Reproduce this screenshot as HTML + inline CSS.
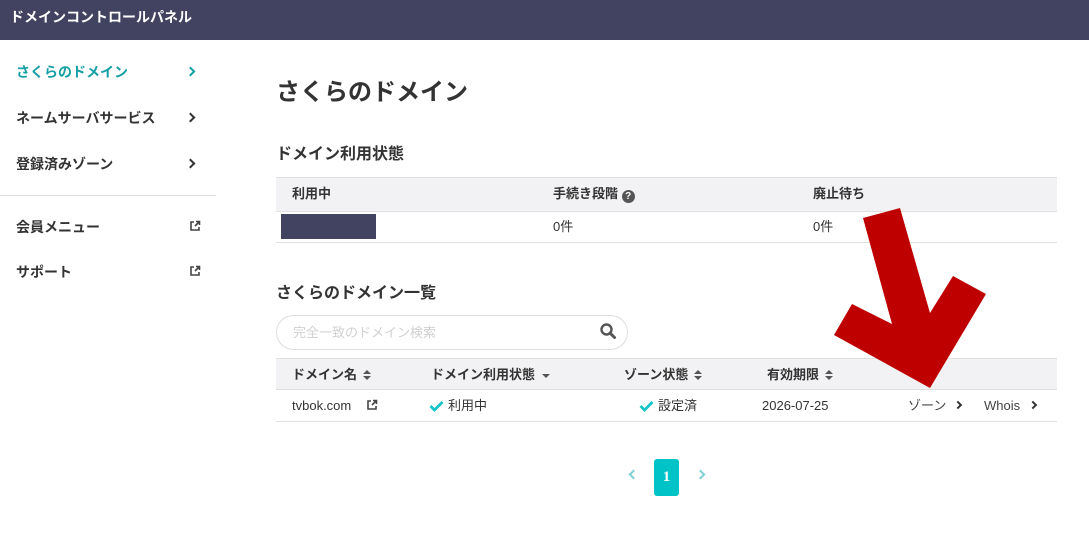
<!DOCTYPE html>
<html><head><meta charset="utf-8"><style>
*{margin:0;padding:0;box-sizing:border-box}
body{width:1089px;height:536px;background:#fff;position:relative;overflow:hidden;font-family:"Liberation Sans","Noto Sans CJK JP",sans-serif;color:#333}
.a{position:absolute;white-space:nowrap;line-height:1.15}
.b{font-weight:bold}
.hdr{left:0;top:0;width:1089px;height:40px;background:#424261}
.nav{font-size:14px;font-weight:bold;color:#333;left:16px}
.chev{position:absolute;width:7px;height:7px;border-right:2px solid #333;border-top:2px solid #333;transform:rotate(45deg)}
.th{background:#f2f2f4;border-top:1px solid #e0e0e0;border-bottom:1px solid #e0e0e0}
.td{border-bottom:1px solid #e0e0e0}
.f13{font-size:13px}
.sort{display:inline-block;vertical-align:middle;margin-left:6px;width:8px;height:11px;position:relative}
.sort:before{content:"";position:absolute;left:0;top:0;border:4px solid transparent;border-bottom:4px solid #555;border-top:0}
.sort:after{content:"";position:absolute;left:0;top:6px;border:4px solid transparent;border-top:4px solid #555;border-bottom:0}
</style></head><body>
<div class="a hdr"></div>
<div class="a b" style="left:10px;top:9px;font-size:14px;color:#fff">ドメインコントロールパネル</div>

<div class="a nav" style="top:64px;color:#16a0a5">さくらのドメイン</div>
<div class="chev" style="left:187px;top:68px;border-color:#16a0a5"></div>
<div class="a nav" style="top:110px">ネームサーバサービス</div>
<div class="chev" style="left:187px;top:114px"></div>
<div class="a nav" style="top:156px">登録済みゾーン</div>
<div class="chev" style="left:187px;top:160px"></div>
<div class="a" style="left:0;top:195px;width:216px;height:1px;background:#ddd"></div>
<div class="a nav" style="top:219px">会員メニュー</div>
<svg class="a" style="left:189px;top:220px" width="12" height="12" viewBox="0 0 12 12"><path d="M5 2H2v8h8V7" fill="none" stroke="#444" stroke-width="1.6"/><path d="M6 6L10.5 1.5M7 1.5h3.5V5" fill="none" stroke="#444" stroke-width="1.6"/></svg>
<div class="a nav" style="top:264px">サポート</div>
<svg class="a" style="left:189px;top:265px" width="12" height="12" viewBox="0 0 12 12"><path d="M5 2H2v8h8V7" fill="none" stroke="#444" stroke-width="1.6"/><path d="M6 6L10.5 1.5M7 1.5h3.5V5" fill="none" stroke="#444" stroke-width="1.6"/></svg>

<div class="a b" style="left:276px;top:79px;font-size:24px">さくらのドメイン</div>
<div class="a b" style="left:276px;top:146px;font-size:16px">ドメイン利用状態</div>

<div class="a th" style="left:276px;top:177px;width:781px;height:35px"></div>
<div class="a td" style="left:276px;top:212px;width:781px;height:31px"></div>
<div class="a b f13" style="left:292px;top:187px">利用中</div>
<div class="a b f13" style="left:553px;top:187px">手続き段階 <span style="display:inline-block;width:13px;height:13px;border-radius:50%;background:#555;color:#fff;font-size:10px;text-align:center;line-height:13px;vertical-align:-1px">?</span></div>
<div class="a b f13" style="left:813px;top:187px">廃止待ち</div>
<div class="a" style="left:281px;top:214px;width:95px;height:25px;background:#424261"></div>
<div class="a f13" style="left:553px;top:220px">0件</div>
<div class="a f13" style="left:813px;top:220px">0件</div>

<div class="a b" style="left:276px;top:285px;font-size:16px">さくらのドメイン一覧</div>
<div class="a" style="left:276px;top:315px;width:352px;height:35px;border:1px solid #ddd;border-radius:18px"></div>
<div class="a f13" style="left:293px;top:326px;color:#d0d0d0">完全一致のドメイン検索</div>
<svg class="a" style="left:599px;top:322px" width="18" height="18" viewBox="0 0 18 18"><circle cx="7.5" cy="7.5" r="5" fill="none" stroke="#555" stroke-width="2.4"/><path d="M11 11l4.5 4.5" stroke="#555" stroke-width="3" stroke-linecap="round"/></svg>

<div class="a th" style="left:276px;top:358px;width:781px;height:32px"></div>
<div class="a td" style="left:276px;top:390px;width:781px;height:32px"></div>
<div class="a b f13" style="left:292px;top:368px">ドメイン名<span class="sort"></span></div>
<div class="a b f13" style="left:431px;top:368px">ドメイン利用状態<span style="display:inline-block;margin-left:7px;border:4px solid transparent;border-top:4px solid #555;border-bottom:0;vertical-align:middle"></span></div>
<div class="a b f13" style="left:624px;top:368px">ゾーン状態<span class="sort"></span></div>
<div class="a b f13" style="left:767px;top:368px">有効期限<span class="sort"></span></div>

<div class="a f13" style="left:292px;top:399px">tvbok.com</div>
<svg class="a" style="left:366px;top:399px" width="12" height="12" viewBox="0 0 12 12"><path d="M5 2H2v8h8V7" fill="none" stroke="#444" stroke-width="1.6"/><path d="M6 6L10.5 1.5M7 1.5h3.5V5" fill="none" stroke="#444" stroke-width="1.6"/></svg>
<svg class="a" style="left:429px;top:400px" width="15" height="12" viewBox="0 0 15 12"><path d="M1.5 6l4 4L13.5 2" fill="none" stroke="#17c3c8" stroke-width="2.8"/></svg>
<div class="a f13" style="left:448px;top:399px">利用中</div>
<svg class="a" style="left:639px;top:400px" width="15" height="12" viewBox="0 0 15 12"><path d="M1.5 6l4 4L13.5 2" fill="none" stroke="#17c3c8" stroke-width="2.8"/></svg>
<div class="a f13" style="left:658px;top:399px">設定済</div>
<div class="a f13" style="left:762px;top:399px">2026-07-25</div>
<div class="a f13" style="left:908px;top:399px;color:#444">ゾーン</div>
<div class="chev" style="left:955px;top:402px;width:6px;height:6px"></div>
<div class="a f13" style="left:984px;top:399px;color:#444">Whois</div>
<div class="chev" style="left:1030px;top:402px;width:6px;height:6px"></div>

<div class="chev" style="left:630px;top:471px;transform:rotate(-135deg);border-color:#80d0d4"></div>
<div class="a" style="left:654px;top:459px;width:25px;height:37px;background:#00c3c8;border-radius:3px;color:#fff;font-family:'Liberation Serif',serif;font-weight:bold;font-size:15px;text-align:center;line-height:37px">1</div>
<div class="chev" style="left:697px;top:471px;border-color:#80d0d4"></div>

<svg class="a" style="left:0;top:0" width="1089" height="536"><polygon points="863,218 900,208 930,313 953,276 986,294 930,388 834,335 852,304 892,324" fill="#bf0000"/></svg>
</body></html>
